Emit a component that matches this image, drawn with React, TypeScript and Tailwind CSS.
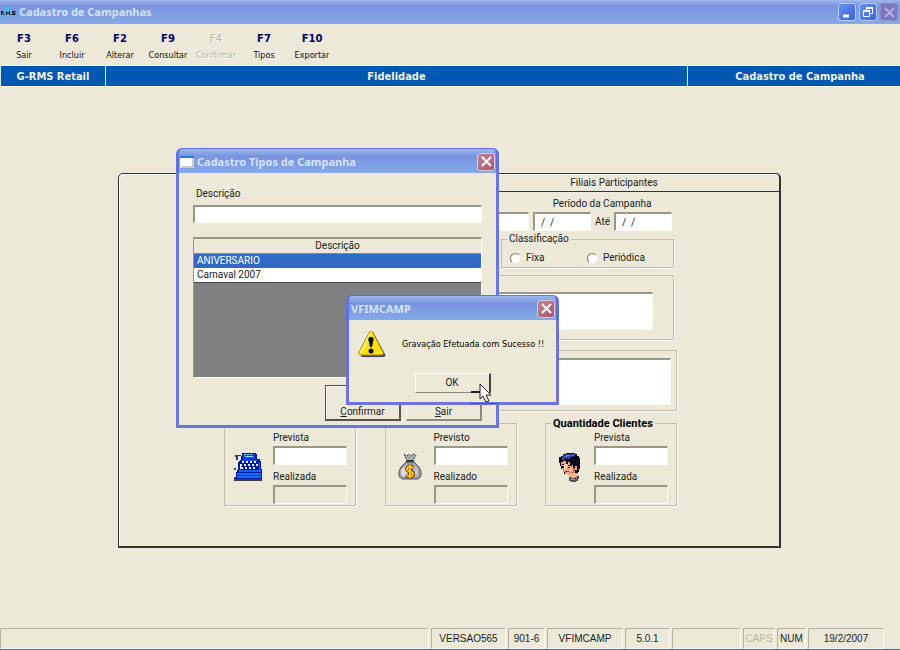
import { ReactNode } from 'react'

const ui = "font-['Roboto','Liberation_Sans',sans-serif] text-[10px] leading-4"
const tahoma = "font-['DejaVu_Sans_Condensed','DejaVu_Sans',sans-serif]"
const caption = "font-['Noto_Sans',sans-serif] text-[11px] leading-4 font-bold text-[#d6e2fb]"
const sunken =
  'block rounded-none border-t-2 border-l-2 border-r border-b border-t-[#9a978a] border-l-[#9a978a] border-r-[#fbfaf5] border-b-[#fbfaf5] outline-none'
const etched = 'border border-[#c2bfb1] shadow-[1px_1px_0_#fbfaf4]'

const menu = [
  { hotkey: 'F3', label: 'Sair' },
  { hotkey: 'F6', label: 'Incluir' },
  { hotkey: 'F2', label: 'Alterar' },
  { hotkey: 'F9', label: 'Consultar' },
  { hotkey: 'F4', label: 'Confirmar', disabled: true },
  { hotkey: 'F7', label: 'Tipos' },
  { hotkey: 'F10', label: 'Exportar' },
]

const status = [
  { text: '', width: 'flex-1' },
  { text: 'VERSAO565', width: 'w-[75px]' },
  { text: '901-6', width: 'w-[37px]' },
  { text: 'VFIMCAMP', width: 'w-[76px]' },
  { text: '5.0.1', width: 'w-[45px]' },
  { text: '', width: 'w-[69px]' },
  { text: 'CAPS', width: 'w-[32px]', off: true },
  { text: 'NUM', width: 'w-[29px]' },
  { text: '19/2/2007', width: 'w-[76px]' },
]

function Logo() {
  return (
    <svg width="16" height="16" viewBox="0 0 16 16" aria-hidden="true">
      <path d="M6 5l5-3-2 4v4l-3 4 1-4-3-2z" fill="#19d3e6" />
      <path d="M1.500 7v4M1 7.500h2v1.500l1 2M6.500 11V7.500l1.500 2 1.500-2V11M15.500 7.500h-3V9h2.500v1.500h-3.500" fill="none" stroke="#0a1020" />
    </svg>
  )
}

function CloseButton() {
  return (
    <button type="button" aria-label="Fechar" className="flex size-[18px] items-center justify-center rounded-[3px] border border-[#d9c6dc] bg-gradient-to-br from-[#c08497] to-[#a8586c]">
      <svg width="11" height="11" viewBox="0 0 11 11">
        <path d="M1 1l9 9M10 1l-9 9" stroke="#fff" strokeWidth="2" />
      </svg>
    </button>
  )
}

function TitleBar({ title, icon }: { title: string; icon?: ReactNode }) {
  return (
    <div className="flex h-[25px] items-center gap-[3px] rounded-t-[6px] border-x-3 border-t border-[#5f72dc] bg-gradient-to-b from-[#9db9ee] via-[#7a93de] via-30% to-[#84abea] pt-px pr-px pl-px">
      {icon}
      <h2 className={`flex-1 ${icon ? '' : 'pl-px'} ${caption}`}>{title}</h2>
      <CloseButton />
    </div>
  )
}

function Typewriter() {
  return (
    <svg width="30" height="28" viewBox="0 0 30 28" shapeRendering="crispEdges" aria-hidden="true">
      <path d="M1 2h6v1H4v4H2V4H1zM0 15h2v2H0zM0 24h2v2h26v2H0z" fill="#3c3c44" />
      <path d="M8 0h14v1h1v5h3v2h1v8h1v10H2v-6l2-4V10l2-3h1z" fill="#0018a8" />
      <path d="M9 1h12v5H9z" fill="#0a50e0" />
      <path d="M10 1h2v1h-2zM13 1h2v1h-2zM16 1h2v1h-2zM11 3h8v1h-8z" fill="#9fd4ff" />
      <path d="M8 7h16v1H8zM5 17h22v2H5z" fill="#1565ea" />
      <path d="M8 8h2v2H8zM12 8h2v2h-2zM16 8h2v2h-2zM20 8h2v2h-2zM6 11h2v2H6zM10 11h2v2h-2zM14 11h2v2h-2zM18 11h2v2h-2zM22 11h2v2h-2zM7 14h2v2H7zM11 14h2v2h-2zM15 14h2v2h-2zM19 14h2v2h-2zM6 13h1v3H6z" fill="#e4f1ff" />
      <path d="M3 20h24v5H3z" fill="#0a6ff0" />
      <path d="M3 22h24v1H3z" fill="#0030b8" />
      <path d="M25 9h1v8h-1z" fill="#1565ea" />
    </svg>
  )
}

function MoneyBag() {
  return (
    <svg width="24" height="28" viewBox="0 0 24 28" aria-hidden="true">
      <path d="M6 1l3 2 2-2 2 2 2-2 3 1-3 6H9z" fill="#a9a9ae" stroke="#4b4b50" strokeDasharray="2 1" />
      <path d="M8 9h8l5 5c3 5 3 10-1 12H4C0 24 0 19 3 14z" fill="#9a9aa1" stroke="#55555b" />
      <path d="M9 11l-6 6v5l3 2 5-6z" fill="#dedee3" />
      <path d="M16 11l4 5v6l-3 2z" fill="#c4c4ca" />
      <path d="M8 8h8" stroke="#333338" strokeWidth="2" />
      <path d="M15 15c-1-2-6-2-6 1s6 2 6 5-5 3-6 1M12 12v13" fill="none" stroke="#7d4300" strokeWidth="4" />
      <path d="M15 15c-1-2-6-2-6 1s6 2 6 5-5 3-6 1M12 12v13" fill="none" stroke="#fbc60e" strokeWidth="2" />
    </svg>
  )
}

function Customer() {
  return (
    <svg width="22" height="30" viewBox="0 0 22 30" shapeRendering="crispEdges" aria-hidden="true">
      <path d="M4 2h3V1h9v1h2v2h2v2h1v11h-1v3h-1v2H5v-2H4v-3H2v-3H1v-3H0V5h2V4h2z" fill="#0b0b1d" />
      <path d="M2 10h2V9h3v3h2v-2h2v3h3v3h2v-2h2v4h-2v3h-2v2H9v-1H6v-2H4v-3H3v-3H2z" fill="#f0a27e" />
      <path d="M4 12h4v4H7v2H5v-2H4zM10 17h3v2h-3z" fill="#fbd0b0" />
      <path d="M14 16h2v3h-1v2h-3v-1h2zM4 17h1v2H4z" fill="#c9694a" />
      <path d="M4 3h3V2h9v2h-2v1h-3v2H8V6H6v2H3V6H2V5h2z" fill="#3a43a4" />
      <path d="M7 3h4v1H8v1H6V4h1zM13 3h2v1h-2z" fill="#6d7ae0" />
      <path d="M3 12h2v1H3zM3 14h2v2H3zM9 13h4v1H9zM9 15h3v1H9z" fill="#10203c" />
      <path d="M11 15h1v1h-1z" fill="#dff0ff" />
      <path d="M6 19h4v1H6z" fill="#a32f25" />
      <path d="M10 21h9v5h-8v-1h-1z" fill="#e9b394" />
      <path d="M10 25h2v1h4v-1h2v-1h2v3h-1v2h-2v1h-5v-1h-2z" fill="#4f4f57" />
      <path d="M12 27h4v1h-4zM17 26h1v1h-1z" fill="#a5a5ac" />
    </svg>
  )
}

function Warning() {
  return (
    <svg width="28" height="28" viewBox="0 0 28 28" className="shrink-0" aria-hidden="true">
      <path d="M15 2l12 22c1 2 0 3-2 3H4l-1-1z" fill="#39407c" />
      <path d="M11 3c1-2 3-2 4 0l10 19c1 2 0 3-2 3H3c-2 0-3-1-2-3z" fill="#fbe10b" stroke="#b58d00" />
      <path d="M11 4c1-1 1-1 2 0L4 23c-2 0-2 0-2-1z" fill="#fff48a" />
      <path d="M13 7c3 0 3 2 2 5l-1 5h-2l-1-5c-1-3-1-5 2-5z" fill="#0b0b14" />
      <circle cx="13" cy="21" r="2.5" fill="#0b0b14" />
    </svg>
  )
}

function Amounts({ id, title, icon, planned, actual }: { id: string; title?: string; icon: ReactNode; planned: string; actual: string }) {
  return (
    <fieldset className={`w-[132px] pb-px ${etched}`}>
      <legend className={title ? 'ml-[5px] h-[13px] px-[2px] text-[11px] leading-[14px] font-bold whitespace-nowrap text-black' : 'h-[13px]'}>
        {title}
      </legend>
      <div className="flex">
        <div className="flex w-12 items-center justify-center">{icon}</div>
        <div className="w-[74px]">
          <label htmlFor={id + '-planned'} className="block h-4">{planned}</label>
          <input id={id + '-planned'} className={`h-[19px] w-full bg-white px-1 ${sunken}`} />
          <label htmlFor={id + '-actual'} className="mt-1 block h-4">{actual}</label>
          <input id={id + '-actual'} disabled className={`h-[19px] w-full bg-[#ece9d8] px-1 ${sunken}`} />
        </div>
      </div>
    </fieldset>
  )
}

function CampaignForm() {
  return (
    <form className="flex flex-col pt-1 pr-[102px] pb-10 pl-[105px]">
      <div className="w-[150px] self-end text-center">Período da Campanha</div>
      <div className="flex items-center justify-end gap-1 pr-[5px]">
        <input aria-label="Código" className={`h-[19px] w-[60px] bg-white px-1 ${sunken}`} />
        <input aria-label="De" defaultValue="/  /" className={`h-[19px] w-[58px] bg-white pl-[6px] ${sunken}`} />
        <label htmlFor="until">Até</label>
        <input id="until" defaultValue="/  /" className={`h-[19px] w-[58px] bg-white pl-[6px] ${sunken}`} />
      </div>
      <fieldset className={`mr-[3px] h-[37px] w-[173px] self-end ${etched}`}>
        <legend className="ml-[5px] px-[2px]">Classificação</legend>
        <div className="flex pt-[3px] pl-2">
          {['Fixa', 'Periódica'].map((name) => (
            <label key={name} className="flex w-[77px] items-center gap-[5px]">
              <input type="radio" name="kind" className="size-[11px] appearance-none rounded-full border border-t-[#77756a] border-r-[#f1efe2] border-b-[#f1efe2] border-l-[#77756a] bg-white" />
              {name}
            </label>
          ))}
        </div>
      </fieldset>
      <div className={`mt-[7px] mr-[3px] h-[65px] pt-4 pr-5 ${etched}`}>
        <textarea aria-label="Descrição da campanha" className={`h-[38px] w-full resize-none bg-white ${sunken}`} />
      </div>
      <div className={`mt-[10px] h-[61px] px-[5px] pt-[7px] ${etched}`}>
        <textarea aria-label="Observação" className={`h-[47px] w-full resize-none bg-white ${sunken}`} />
      </div>
      <div className="mt-[6px] flex justify-between">
        <Amounts id="sales" icon={<Typewriter />} planned="Prevista" actual="Realizada" />
        <Amounts id="money" icon={<MoneyBag />} planned="Previsto" actual="Realizado" />
        <Amounts id="customers" title="Quantidade Clientes" icon={<Customer />} planned="Prevista" actual="Realizada" />
      </div>
    </form>
  )
}

function TypesDialog() {
  const icon = (
    <svg width="14" height="12" viewBox="0 0 14 12" aria-hidden="true">
      <path d="M0 0h14v12H0z" fill="#fff" />
      <path d="M0 0h14v2H0z" fill="#1f7fdc" />
      <path d="M13 2v9H1" fill="none" stroke="#9a9a90" />
    </svg>
  )
  return (
    <section className="absolute top-[148px] left-[176px] w-[323px]">
      <TitleBar title="Cadastro Tipos de Campanha" icon={icon} />
      <div className="border-3 border-t-0 border-[#6a76dc] bg-[#ece9d8] px-[14px] pt-[13px] pb-1">
        <label htmlFor="type" className="block pl-[3px]">Descrição</label>
        <input id="type" className={`mt-[3px] h-[18px] w-full bg-white px-1 ${sunken}`} />
        <div className="mt-[14px] h-[141px] border-t-2 border-l border-r border-b border-[#9a978a] border-r-[#fbfaf5] border-b-[#fbfaf5] bg-[#808080]">
          <table className="w-full border-collapse leading-[14px]">
            <thead>
              <tr className="h-[14px] border-b border-[#8d8a7d] bg-[#ece9d8]">
                <th className="p-0 font-normal">Descrição</th>
              </tr>
            </thead>
            <tbody>
              <tr className="h-[14px] bg-[#316ac5] text-white">
                <td className="px-[3px] py-0">ANIVERSARIO</td>
              </tr>
              <tr className="h-[14px] border-b border-[#444] bg-white">
                <td className="px-[3px] py-0">Carnaval 2007</td>
              </tr>
            </tbody>
          </table>
        </div>
        <div className="mt-[7px] flex justify-end gap-[5px] leading-[14px]">
          <button type="button" className="flex h-9 w-[76px] items-end justify-center border border-r-2 border-b-2 border-[#5c5048] shadow-[inset_1px_1px_0_#fff]">
            <span><u>C</u>onfirmar</span>
          </button>
          <button type="button" className="flex h-9 w-[76px] items-end justify-center border border-r-2 border-b-2 border-[#fbfaf5] border-r-[#8d8a7d] border-b-[#8d8a7d]">
            <span><u>S</u>air</span>
          </button>
        </div>
      </div>
    </section>
  )
}

function MessageBox() {
  return (
    <section role="alertdialog" aria-label="VFIMCAMP" className="absolute top-[295px] left-[346px] w-[213px]">
      <TitleBar title="VFIMCAMP" />
      <div className="border-3 border-t-0 border-[#6a76dc] bg-[#ece9d8] pt-[10px] pb-[9px]">
        <div className="flex items-center gap-4 pl-[9px]">
          <Warning />
          <p className={`text-[9px] whitespace-nowrap text-black ${tahoma}`}>Gravação Efetuada com Sucesso !!</p>
        </div>
        <button type="button" className="mx-auto mt-[15px] block h-5 w-[76px] border border-r-2 border-[#fbfaf5] border-r-[#44423a] border-b-[#8d8a7d]">
          OK
        </button>
      </div>
      {/* mouse pointer */}
      <svg width="30" height="22" viewBox="0 0 30 22" className="absolute top-[88px] left-[124px]" aria-hidden="true">
        <path d="M1 9h9" stroke="#222" strokeWidth="2" />
        <path d="M0 20.500h28" stroke="#1c62e8" />
        <path d="M10 1v15l3-3 3 6 3-1-3-6h5z" fill="#fff" stroke="#222" />
      </svg>
    </section>
  )
}

export default function App() {
  return (
    <main className={`relative flex min-h-screen flex-col bg-[#ece9d8] text-[#222] ${ui}`}>
      <header>
        <div className="flex h-6 items-center gap-[3px] border-b border-[#a9a89f] bg-gradient-to-b from-[#9db9ee] via-[#7a93de] via-25% to-[#84a9e9] pr-[2px]">
          <Logo />
          <h1 className={`flex-1 ${caption}`}>Cadastro de Campanhas</h1>
          <div className="flex gap-[3px]">
            <button type="button" aria-label="Minimizar" className="flex size-[18px] rounded-[3px] border border-[#b9ccf6] bg-gradient-to-br from-[#6b8ff0] to-[#3a62e0]">
              <svg width="16" height="16" viewBox="0 0 16 16"><path d="M4 12h6" stroke="#fff" strokeWidth="3" /></svg>
            </button>
            <button type="button" aria-label="Restaurar" className="flex size-[18px] rounded-[3px] border border-[#b9ccf6] bg-gradient-to-br from-[#6b8ff0] to-[#3a62e0]">
              <svg width="16" height="16" viewBox="0 0 16 16" fill="none" stroke="#fff">
                <path d="M3.500 7v5.500h6V7" /><path d="M3 7h7" strokeWidth="2" />
                <path d="M6.500 6V4M12.500 4v5.500H10" /><path d="M6 4h7" strokeWidth="2" />
              </svg>
            </button>
            <button type="button" aria-label="Fechar" disabled className="flex size-[18px] rounded-[3px] border border-[#8d90cf] bg-[#7b78bd]">
              <svg width="16" height="16" viewBox="0 0 16 16"><path d="M4 4l9 9M13 4l-9 9" stroke="#b3aede" strokeWidth="2" /></svg>
            </button>
          </div>
        </div>
        <nav className="flex h-[41px] pt-[7px]">
          {menu.map((item) => (
            <button
              key={item.hotkey}
              type="button"
              disabled={item.disabled}
              className={`flex w-12 flex-col items-center ${item.disabled ? 'text-[#b9b6a8] [text-shadow:1px_1px_0_#fff]' : 'text-[#111]'}`}
            >
              <b className={`font-['DejaVu_Sans'] ${item.disabled ? 'font-normal' : 'text-[#000066]'}`}>{item.hotkey}</b>
              <span className={`text-[9px] leading-4 ${tahoma}`}>{item.label}</span>
            </button>
          ))}
        </nav>
        <div className={`flex h-[22px] border-y border-[#fbfaf5] bg-[#0058b0] text-center text-[11px] leading-[22px] font-bold text-[#f0f0e8] ${tahoma}`}>
          <div className="h-5 w-[106px] border-x border-[#dfe6ee]">G-RMS Retail</div>
          <div className="h-5 flex-1">Fidelidade</div>
          <div className="h-5 w-[213px] border-l border-[#dfe6ee] pl-3">Cadastro de Campanha</div>
        </div>
      </header>

      <div className="flex-1 pt-[86px] pr-px">
        <div className="mx-auto w-full max-w-[663px] rounded-t-[5px] border border-r-2 border-b-2 border-[#333] shadow-[inset_1px_1px_0_#fff]">
          <div className="grid h-[18px] grid-cols-2 text-center">
            <div />
            <div className="border-b border-[#333] pt-px">Filiais Participantes</div>
          </div>
          <CampaignForm />
        </div>
      </div>

      <footer className="flex gap-[2px] border-b border-[#2f6ad0] pr-4 text-center font-['Liberation_Sans'] text-[10px]">
        {status.map((cell, i) => (
          <div
            key={i}
            className={`h-[21px] border border-[#b5b2a4] border-r-[#fbfaf5] border-b-[#fbfaf5] leading-5 ${cell.width} ${cell.off ? 'text-[#b9b6a8]' : ''}`}
          >
            {cell.text}
          </div>
        ))}
      </footer>

      <TypesDialog />
      <MessageBox />
    </main>
  )
}
